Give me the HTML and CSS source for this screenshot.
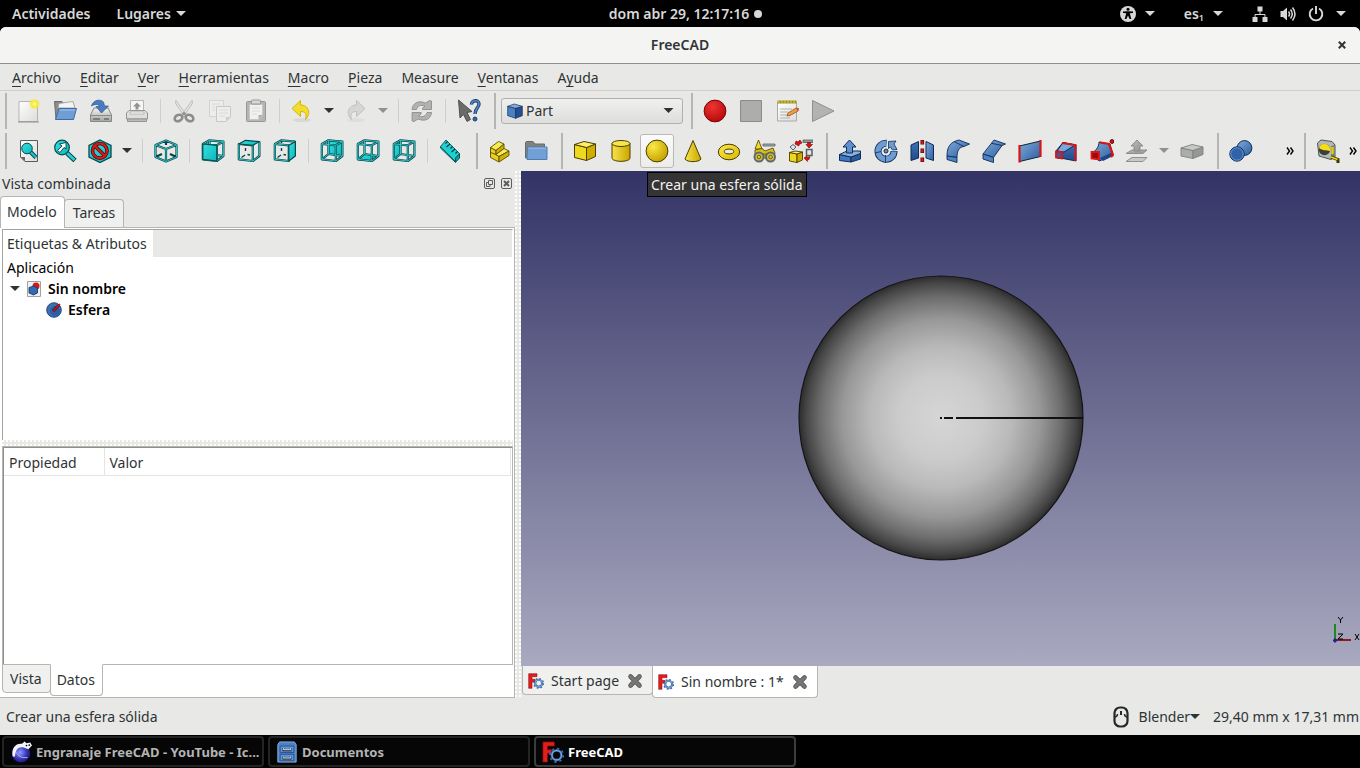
FILE: index.html
```html
<!DOCTYPE html>
<html lang="es">
<head>
<meta charset="utf-8">
<title>FreeCAD</title>
<link rel="stylesheet" href="styles.css">
</head>
<body>
<svg class="sprite" aria-hidden="true">
  <defs>
    <linearGradient id="g-teal" x1="0" y1="0" x2="1" y2="1"><stop offset="0" stop-color="#34e0e2"/><stop offset="1" stop-color="#0fb6ba"/></linearGradient>
    <linearGradient id="g-yel" x1="0" y1="0" x2="1" y2="1"><stop offset="0" stop-color="#fbe94a"/><stop offset="1" stop-color="#d9b800"/></linearGradient>
    <linearGradient id="g-yelh" x1="0" y1="0" x2="1" y2="0"><stop offset="0" stop-color="#f7e448"/><stop offset="1" stop-color="#c9a500"/></linearGradient>
    <radialGradient id="g-yelr" cx=".32" cy=".3" r=".8"><stop offset="0" stop-color="#fbe94a"/><stop offset=".5" stop-color="#dfc21c"/><stop offset="1" stop-color="#c19c00"/></radialGradient>
    <linearGradient id="g-blue" x1="0" y1="0" x2="1" y2="1"><stop offset="0" stop-color="#7fabdc"/><stop offset="1" stop-color="#2c5c9e"/></linearGradient>
    <linearGradient id="g-dblue" x1="0" y1="0" x2="0" y2="1"><stop offset="0" stop-color="#3f73b5"/><stop offset="1" stop-color="#20498a"/></linearGradient>
    <linearGradient id="g-gray" x1="0" y1="0" x2="1" y2="1"><stop offset="0" stop-color="#bcbcba"/><stop offset="1" stop-color="#92928f"/></linearGradient>
    <linearGradient id="g-paper" x1="0" y1="0" x2="1" y2="1"><stop offset="0" stop-color="#fff"/><stop offset="1" stop-color="#dcdcda"/></linearGradient>
    <linearGradient id="g-metal" x1="0" y1="0" x2="0" y2="1"><stop offset="0" stop-color="#f4f4f3"/><stop offset="1" stop-color="#a4a6a3"/></linearGradient>
    <radialGradient id="g-red" cx=".4" cy=".3" r=".8"><stop offset="0" stop-color="#ef3434"/><stop offset="1" stop-color="#b00505"/></radialGradient>
    <radialGradient id="g-glow"><stop offset="0" stop-color="#fffbb0"/><stop offset=".5" stop-color="#f6ea30"/><stop offset="1" stop-color="#f6ea30" stop-opacity="0"/></radialGradient>
    <radialGradient id="g-globe" cx=".45" cy=".45" r=".6"><stop offset="0" stop-color="#8fa0ff"/><stop offset=".6" stop-color="#3a34b8"/><stop offset="1" stop-color="#1a1670"/></radialGradient>
    <radialGradient id="g-sphere"><stop offset="0" stop-color="#d6d6d6"/><stop offset=".3" stop-color="#cbcbcb"/><stop offset=".5" stop-color="#b9b9b9"/><stop offset=".7" stop-color="#979797"/><stop offset=".85" stop-color="#6d6d6d"/><stop offset=".95" stop-color="#464646"/><stop offset="1" stop-color="#2c2c2c"/></radialGradient>
    <path id="wire" d="M1.800 5L15.800 6.300V22L1.800 20.300ZM8.500 1.300L22.400 2.600V17L8.500 15ZM1.800 5L8.500 1.300M15.800 6.300L22.400 2.600M15.800 22L22.400 17M1.800 20.300L8.500 15"/>
  </defs>
  <symbol id="i-new" viewBox="0 0 24 24"><path d="M2 2.500H20.500V22.500H2Z" fill="url(#g-paper)" stroke="#b4b4b2"/><path d="M1 23H22" stroke="#8d8d8b"/><circle cx="17.500" cy="5" r="6" fill="url(#g-glow)"/></symbol>
  <symbol id="i-open" viewBox="0 0 24 24"><path d="M1.500 2.500H9L11 4.500H20.500V20H3Z" fill="#8a8c89" stroke="#6c6e6b"/><path d="M6 4.500L20 2.500 22 9H5Z" fill="#f4f4f4" stroke="#a9a9a7"/><path d="M6 9.500H23.500L20.500 20.500H2.500Z" fill="#6f9dd4" stroke="#3d6ba8"/><path d="M7 11H22" stroke="#a5c4ea"/></symbol>
  <symbol id="i-save" viewBox="0 0 24 24"><path d="M5 9H19L22.500 16V22.500H1.500V16Z" fill="url(#g-metal)" stroke="#868885"/><path d="M2 16.500H22" stroke="#8a8c89"/><path d="M4 20H11M15 20H20" stroke="#6a6c69" stroke-width="1.500"/><path d="M2.500 7C4 1 11-.5 14.500 3L15.500 7H19.500L12.500 14 7 7.500H11C9 4.500 5.500 5 2.500 7Z" fill="#4b7cc0" stroke="#2d5792" stroke-width=".7"/></symbol>
  <symbol id="i-print" viewBox="0 0 24 24"><path d="M5.500 1.500H18.500V12H5.500Z" fill="#f6f6f5" stroke="#b5b5b3"/><path d="M12 3.500L16 7.500H13.500V10.500H10.500V7.500H8Z" fill="#929491"/><path d="M4 11.500H20L22.500 14V20H1.500V14Z" fill="#dededc" stroke="#939592"/><path d="M5 13H19V15H5Z" fill="#f9f9f8" stroke="#a6a8a5" stroke-width=".7"/><path d="M2.500 20V22.500H21.500V20Z" fill="#bcbdba" stroke="#939592"/></symbol>
  <symbol id="i-cut" viewBox="0 0 24 24"><path d="M4 1.500L14.500 16 12.500 17.500 3.500 4ZM20 1.500L9.500 16 11.500 17.500 20.500 4Z" fill="#e9e9e8" stroke="#aeb0ad" stroke-width=".8"/><g fill="none" stroke="#8b8d8a" stroke-width="2.600"><ellipse cx="6.500" cy="19" rx="4" ry="3" transform="rotate(-25 6.500 19)"/><ellipse cx="17.500" cy="19" rx="4" ry="3" transform="rotate(25 17.500 19)"/></g><circle cx="12" cy="14.500" r="1.500" fill="#8b8d8a"/></symbol>
  <symbol id="i-copy" viewBox="0 0 24 24"><g stroke="#d3d3d1" fill="#ededeb"><path d="M1.500 1.500H15.500V17.500H1.500Z"/><path d="M8.500 7.500H22.500V18L18 22.500H8.500Z" stroke="#c8c8c6"/></g><path d="M4 5H13M4 8H7M4 11H7M11 11H20M11 14H20M11 17H17" stroke="#dadad8"/><path d="M18 22V18H22Z" fill="#cacac8"/></symbol>
  <symbol id="i-paste" viewBox="0 0 24 24"><rect x="2.500" y="2.500" width="19" height="20" rx="1" fill="#b5b5b3" stroke="#979996"/><path d="M5.500 5.500H18.500V16L14.500 20.500H5.500Z" fill="#f1f1f0" stroke="#c5c5c3"/><path d="M14.500 20V16H18.500Z" fill="#aeb0ad"/><path d="M8 9H16M8 12H16M8 15H13" stroke="#dbdbd9"/><rect x="7.500" y="1" width="9" height="4" rx="1" fill="#d7d7d5" stroke="#989a97"/></symbol>
  <symbol id="i-undo" viewBox="0 0 24 24"><ellipse cx="12" cy="21" rx="9" ry="2" fill="#d8d8d6"/><path d="M2 9.500L10.500 1.500V6C18 6 22 14 15.500 20.500 17 15 15.500 12.500 10.500 12.500V17.500Z" fill="#f2dc2c" stroke="#cfb200" stroke-width=".9"/></symbol>
  <symbol id="i-redo" viewBox="0 0 24 24"><ellipse cx="12" cy="21" rx="9" ry="2" fill="#dededc"/><path d="M21 9.500L12.500 1.500V6C5 6 1 14 7.500 20.500 6 15 7.500 12.500 12.500 12.500V17.500Z" fill="#d6d6d4" stroke="#bdbdbb" stroke-width=".9"/></symbol>
  <symbol id="i-refresh" viewBox="0 0 24 24"><path id="rf" d="M2 10.500C3 4 8 1 15.500 4L19.500 1.500 21.500 2V10.500H12.500V9L15 7C10 5.500 8 7 6.500 10.500Z" fill="#b1b3b0" stroke="#8d8f8c" stroke-width=".9"/><use href="#rf" transform="rotate(180 11.800 12)"/></symbol>
  <symbol id="i-whats" viewBox="0 0 24 24"><path d="M1.500 1L15 12.500 10 13.500 13.500 20.500 10 22.500 6.500 15.500 3 19Z" fill="#6a6c69" stroke="#474946" stroke-width=".9"/><path d="M14.500 5.500C14.500 .5 22 .5 22 5 22 9 18 9 18 15" fill="none" stroke="#1d4076" stroke-width="3.400"/><path d="M14.500 5.500C14.500 .5 22 .5 22 5 22 9 18 9 18 15" fill="none" stroke="#5583c2" stroke-width="1.600"/><circle cx="18" cy="20" r="2" fill="#3566a8" stroke="#1d4076"/></symbol>
  <symbol id="i-part" viewBox="0 0 24 24"><g stroke="#122b50" stroke-linejoin="round"><path d="M1 5L13 8V23L1 19Z" fill="#4a80c4"/><path d="M13 8L23 5V19L13 23Z" fill="#234f8f"/><path d="M1 5L11 1.500 23 5 13 8Z" fill="#81acdc"/></g></symbol>
  <symbol id="i-rec" viewBox="0 0 24 24"><circle cx="12" cy="12" r="10.900" fill="url(#g-red)" stroke="#7e0202"/></symbol>
  <symbol id="i-stop" viewBox="0 0 24 24"><path d="M1.500 1.500H22.500V22.500H1.500Z" fill="#adadab" stroke="#8b8b89"/></symbol>
  <symbol id="i-macro" viewBox="0 0 24 24"><path d="M2.500 3.500H21.500V22H2.500Z" fill="url(#g-paper)" stroke="#a8aaa7"/><path d="M2.500 1.500H21.500V4.500H2.500Z" fill="#9b8f24"/><path d="M4 1V5M7 1V5M10 1V5M13 1V5M16 1V5M19 1V5" stroke="#dbce5c"/><path d="M5 10H17M5 13H13M5 16H14M5 19H15" stroke="#b0b2af"/><path d="M12 17L13 14 21 9 23.500 9.500 23 12 15 16.500Z" fill="#ee9b4c" stroke="#96531b" stroke-width=".8"/><path d="M21 9L23.500 9.500 23 12Z" fill="#d33c3c"/></symbol>
  <symbol id="i-play" viewBox="0 0 24 24"><path d="M1.500 1.500L23 12 1.500 22.500Z" fill="#b2b4b1" stroke="#8f918e"/></symbol>
  <symbol id="i-fit" viewBox="0 0 24 24"><path d="M3.500 1.500H20.500V22.500H8L3.500 18Z" fill="url(#g-paper)" stroke="#5a5c59"/><path d="M3.500 18H8V22.500Z" fill="#666"/><path d="M13.500 13L19 18.500" stroke="#043c3e" stroke-width="4"/><path d="M13.500 13L19 18.500" stroke="#1bc4c8" stroke-width="2.400"/><circle cx="10" cy="9.500" r="5.300" fill="url(#g-teal)" stroke="#064a4c" stroke-width="1"/></symbol>
  <symbol id="i-sel" viewBox="0 0 24 24"><path d="M14 14L22 21.500" stroke="#043c3e" stroke-width="4.800"/><path d="M14 14L21.500 21" stroke="#22d0d3" stroke-width="3"/><circle cx="9" cy="8.500" r="7.300" fill="url(#g-teal)" stroke="#064a4c" stroke-width="1.200"/><path d="M13 3.500V10L11 8.500 7 13.500 4.500 11.500 9 7 6.500 5Z" fill="#fff" stroke="#043c3e" stroke-width=".9"/></symbol>
  <symbol id="i-draw" viewBox="0 0 24 24"><path d="M12 1L23 6.500V18L12 23.500 1 18V6.500Z" fill="url(#g-teal)" stroke="#064a4c" stroke-width="1.300"/><g fill="none"><circle cx="11.800" cy="11.800" r="7.300" stroke="#4a0505" stroke-width="3.600"/><path d="M6.500 6.500L17 17" stroke="#4a0505" stroke-width="3.600"/><circle cx="11.800" cy="11.800" r="7.300" stroke="#d51a1a" stroke-width="2.200"/><path d="M6.500 6.500L17 17" stroke="#d51a1a" stroke-width="2.200"/></g></symbol>
  <symbol id="i-iso" viewBox="0 0 24 24"><path d="M12 1.500L22.500 6V18L12 22.500 1.500 18V6ZM1.500 6L12 10 22.500 6M12 10V22.500M12 1.500V6M1.500 18L8 15M22.500 18L16 15" class="wd"/><path d="M12 1.500L22.500 6V18L12 22.500 1.500 18V6ZM1.500 6L12 10 22.500 6M12 10V22.500" class="wl"/></symbol>
  <symbol id="i-front" viewBox="0 0 24 24"><use href="#wire" class="wd"/><use href="#wire" class="wl"/><path d="M1.800 5L15.800 6.300V22L1.800 20.300Z" class="wf"/></symbol>
  <symbol id="i-top" viewBox="0 0 24 24"><path d="M1.800 5L15.800 6.300V22L1.800 20.300ZM22.400 2.600V17L15.800 22" class="wd"/><path d="M8.500 9V12M8 16L4.500 18.500M10.500 15.500L13 16" class="wt"/><path d="M1.800 5L15.800 6.300V22L1.800 20.300ZM22.400 2.600V17L15.800 22" class="wl"/><path d="M1.800 5L8.500 1.300 22.400 2.600 15.800 6.300Z" class="wf"/></symbol>
  <symbol id="i-right" viewBox="0 0 24 24"><path d="M1.800 5L15.800 6.300V22L1.800 20.300ZM1.800 5L8.500 1.300 22.400 2.600" class="wd"/><path d="M8.500 1.300V4M8.500 9V12M8 16L4.500 18.500M10.500 15.500L13 16" class="wt"/><path d="M1.800 5L15.800 6.300V22L1.800 20.300ZM1.800 5L8.500 1.300 22.400 2.600" class="wl"/><path d="M15.800 6.300L22.400 2.600V17L15.800 22Z" class="wf"/></symbol>
  <symbol id="i-rear" viewBox="0 0 24 24"><path d="M8.500 1.300L22.400 2.600V17L8.500 15Z" class="wf"/><use href="#wire" class="wd"/><use href="#wire" class="wl"/></symbol>
  <symbol id="i-bottom" viewBox="0 0 24 24"><path d="M1.800 20.300L8.500 15 22.400 17 15.800 22Z" class="wf"/><use href="#wire" class="wd"/><use href="#wire" class="wl"/></symbol>
  <symbol id="i-left" viewBox="0 0 24 24"><path d="M1.800 5L8.500 1.300V15L1.800 20.300Z" class="wf"/><use href="#wire" class="wd"/><use href="#wire" class="wl"/></symbol>
  <symbol id="i-ruler" viewBox="0 0 24 24"><path d="M7 1L20.500 14.500 20 18.500 16.500 22.500 1.500 7.500Z" fill="#20cfd2" stroke="#06595b" stroke-width=".9"/><path d="M1.500 7.500L1.500 9 16.500 23.500 20.500 19V14.500L16.500 19V23" fill="#0f9da0" stroke="#06494b" stroke-width=".9"/><path d="M8.500 2.500L6.500 4.500M11 5L7.500 8M13.500 7.500L11.500 9.500M16 10L12.500 13M18.500 12.500L16.500 14.500" stroke="#053a3c" stroke-width="1.100"/></symbol>
  <symbol id="i-stack" viewBox="0 0 24 24"><g stroke="#5a4d00" stroke-width=".9" stroke-linejoin="round"><path d="M2.500 8.500L8 11.500V15.500L11 17.500V23L2.500 18.500Z" fill="#e9d020"/><path d="M2.500 8.500L10.500 2.500 16 5 8 11.500Z" fill="#f9ea52"/><path d="M8 11.500L16 5V9.500L8 15.500Z" fill="#ceb005"/><path d="M8 15.500L16 9.500 21 12 11 17.500Z" fill="#f9ea52"/><path d="M11 17.500L21 12V16.500L11 23Z" fill="#ceb005"/><path d="M2.500 13.500L8 15.500" fill="none"/></g></symbol>
  <symbol id="i-folder" viewBox="0 0 24 24"><path d="M1.500 4C1.500 3 2 2.500 3 2.500H9L11 5H20.500V19H1.500Z" fill="#80827f" stroke="#686a67"/><path d="M3.500 8H23V20.500H3Z" fill="#72a0d6" stroke="#4d7cb8"/><path d="M4.500 9.200H22" stroke="#9cc0ea"/></symbol>
  <symbol id="i-box" viewBox="0 0 24 24"><g stroke="#4a3f00" stroke-linejoin="round"><path d="M1.500 5.500L13.500 8.500V21.500L1.500 18.500Z" fill="#eed91e"/><path d="M13.500 8.500L22.500 5V17.500L13.500 21.500Z" fill="#cfae00"/><path d="M1.500 5.500L11 2.500 22.500 5 13.500 8.500Z" fill="#fcee68"/></g></symbol>
  <symbol id="i-cyl" viewBox="0 0 24 24"><path d="M3 4.500V19.500C5 23.300 19 23.300 21 19.500V4.500Z" fill="url(#g-yelh)" stroke="#4a3f00"/><ellipse cx="12" cy="4.500" rx="9" ry="3" fill="#f6e64a" stroke="#4a3f00"/></symbol>
  <symbol id="i-sph" viewBox="0 0 24 24"><circle cx="12" cy="12" r="10.900" fill="url(#g-yelr)" stroke="#4a3f00"/></symbol>
  <symbol id="i-cone" viewBox="0 0 24 24"><path d="M12 1.500L4 20C6 23.500 18 23.500 20 20Z" fill="url(#g-yelh)" stroke="#4a3f00" stroke-linejoin="round"/></symbol>
  <symbol id="i-torus" viewBox="0 0 24 24"><ellipse cx="12" cy="13" rx="10.700" ry="7.800" fill="url(#g-yel)" stroke="#4a3f00"/><ellipse cx="12" cy="12.500" rx="4.700" ry="2.400" fill="#e8e8e6" stroke="#4a3f00"/></symbol>
  <symbol id="i-prim" viewBox="0 0 24 24"><path d="M5.500 1L2 10H9Z" fill="#efd92a" stroke="#4a3f00" stroke-width=".8"/><path d="M10 5H22V7H10Z" fill="#a3adb2" stroke="#565f63" stroke-width=".8"/><path d="M2 11L9 9.500 12 12 20 9 22 14 21 17H2Z" fill="#ddc112" stroke="#4a3f00" stroke-width=".8"/><g fill="#cfc04e" stroke="#5e6a6f" stroke-width="2"><circle cx="6" cy="18" r="4.500"/><circle cx="17.500" cy="18" r="4.500"/></g><g fill="none" stroke="#6e6300"><circle cx="6" cy="18" r="1.800"/><circle cx="17.500" cy="18" r="1.800"/><path d="M10 15H14M10 19H14"/></g></symbol>
  <symbol id="i-shape" viewBox="0 0 24 24"><g stroke="#4a3f00" stroke-width=".9"><path d="M.5 13.500L8 15V23.500L.5 22Z" fill="#efd91e"/><path d="M8 15L13.500 13V21L8 23.500Z" fill="#cfae00"/><path d="M.5 13.500L6 12 13.500 13 8 15Z" fill="#fcee68"/></g><path d="M4 5.500L7 8 4 11 1 8Z" fill="#e2e4e3" stroke="#566064"/><path d="M6 5L7 2 9 3 11 1 13 4 10 5.500 10 7Z" fill="#d11" stroke="#700" stroke-width=".6"/><path d="M14 1H24V3.500H14Z" fill="#8f9a9f" stroke="#465054" stroke-width=".7"/><path d="M18.500 3.500H21.500V5.500H23.500L20 9 17 5.500H18.500Z" fill="#d11" stroke="#700" stroke-width=".6"/><path d="M17.500 10.500H23V16.500H17.500Z" fill="#e4e6e5" stroke="#566064" stroke-width="1.500"/><path d="M15 19L18 17V18.500L21 17.500 20 20.500 18 21 18.500 22.500Z" fill="#d11" stroke="#700" stroke-width=".6"/></symbol>
  <symbol id="i-extr" viewBox="0 0 24 24"><g stroke="#0f2c55" stroke-linejoin="round"><path d="M1.500 15.500L13 18V23L1.500 21.500Z" fill="#4079bf"/><path d="M13 18L22.500 14.500V20L13 23Z" fill="#2a5a9c"/><path d="M1.500 15.500L9 12H22.500V14.500L13 18Z" fill="#86b1e2"/><path d="M11.500 1L18 8H14.500V14H8.500V8H5Z" fill="#5c90cf"/></g></symbol>
  <symbol id="i-rev" viewBox="0 0 24 24"><g fill="none"><path d="M12.500 4.300A8 8 0 1 0 20 12" stroke="#0f2c55" stroke-width="7"/><path d="M12 4.300A8 8 0 1 0 20 12.500" stroke="#6d9cd3" stroke-width="5.400"/></g><path d="M11.500 16V24M1 14L7 12.500" stroke="#0f2c55" stroke-width=".8"/><path d="M14.500 9.500V2.500L22 2 20 5 23 10.500 18.500 11 16.500 8Z" fill="#6d9cd3" stroke="#0f2c55" stroke-width=".8"/><circle cx="12" cy="12" r="2" fill="#5f92cf" stroke="#0f2c55"/></symbol>
  <symbol id="i-mirror" viewBox="0 0 24 24"><path d="M1 6L8.500 2.500V19L1 21.500Z" fill="url(#g-dblue)" stroke="#0f2c55"/><path d="M16 2.500L23.500 6V21.500L16 19Z" fill="url(#g-blue)" stroke="#0f2c55"/><path d="M12.300 1V5.500M12.300 9.500V14M12.300 18.500V23" stroke="#5a0808" stroke-width="3.600"/><path d="M12.300 1.500V5M12.300 10V13.500M12.300 19V22.500" stroke="#dc1818" stroke-width="2"/></symbol>
  <symbol id="i-fillet" viewBox="0 0 24 24"><g stroke="#0f2c55" stroke-width=".9"><path d="M1 17C1 8 4 3 13 1L23.500 5 18 7.500C13 8 11 12 11 18.500Z" fill="url(#g-blue)"/><path d="M1 17L11 18.500V23.500L1 20.500Z" fill="#4d83c6"/><path d="M8 2.500L18 7.500" fill="none"/></g></symbol>
  <symbol id="i-chamf" viewBox="0 0 24 24"><g stroke="#0f2c55" stroke-width=".9"><path d="M1 15L12 1 23.500 5 20 6.500 11.500 18.500Z" fill="url(#g-blue)"/><path d="M1 15L11.500 18.500V23.500L1 20Z" fill="#4d83c6"/><path d="M9.500 4.300L20 6.500" fill="none"/></g></symbol>
  <symbol id="i-ruled" viewBox="0 0 24 24"><path d="M1.500 7L22.500 2V17.500L1.500 22.500Z" fill="url(#g-blue)" stroke="#123"/><path d="M1.500 6V23.500M22.500 1V18" stroke="#d81414" stroke-width="2.200"/></symbol>
  <symbol id="i-loft" viewBox="0 0 24 24"><path d="M2 12L9 3.500 22 6V22L9 19.500 3 19Z" fill="url(#g-dblue)" stroke="#0f2c55"/><path d="M3 12L9 3.500 21 6 10 13Z" fill="#7ba7da" stroke="#0f2c55"/><path d="M8 4L21.500 6V22" fill="none" stroke="#d81414" stroke-width="2"/><path d="M2 12.500L8 13V19.500L2 18.500Z" fill="#2d5fa5" stroke="#d81414" stroke-width="1.800"/></symbol>
  <symbol id="i-sweep" viewBox="0 0 24 24"><path d="M2 14C7 11 9 7 9 3L20 5 23 16 17 19 9 22Z" fill="url(#g-blue)" stroke="#0f2c55"/><path d="M10 19L23 13V17L13 22Z" fill="#1f4688"/><path d="M10 3.500L19 5 23 16 21 18" fill="none" stroke="#d81414" stroke-width="2.200"/><path d="M1.500 13H9V20.500L1.500 19.500Z" fill="#9a0b0b" stroke="#e01818" stroke-width="1.800"/><circle cx="22" cy="2.500" r="1.900" fill="#d81414" stroke="#600"/></symbol>
  <symbol id="i-offset" viewBox="0 0 24 24"><g fill="url(#g-gray)" stroke="#888a87" stroke-width=".9"><path d="M1 14.500L7 11H22L18 14.500Z"/><path d="M12 1L18 7H15V12H9V7H6Z"/><path d="M1 22.500L7 18.500H22L18 22.500Z" fill="#c8c8c6"/></g></symbol>
  <symbol id="i-thick" viewBox="0 0 24 24"><g stroke="#7f817e" stroke-width=".9"><path d="M1 9L13 11.500V19.500L1 17Z" fill="#abadaa"/><path d="M13 11.500L23 8V15.500L13 19.500Z" fill="#969895"/><path d="M1 9L12 5.500 23 8 13 11.500Z" fill="#c6c8c5"/></g></symbol>
  <symbol id="i-bool" viewBox="0 0 24 24"><circle cx="15.500" cy="9" r="7.400" fill="url(#g-blue)" stroke="#0f2c55"/><circle cx="8" cy="15" r="7.200" fill="#2f62a8" stroke="#0f2c55"/><circle cx="8" cy="15" r="6.200" fill="none" stroke="#6f9cd4" stroke-width=".9"/></symbol>
  <symbol id="i-tape" viewBox="0 0 24 24"><path d="M1.500 4L5 1 16 2.500 19 6V18L15 20.500 3 17Z" fill="#b3bab4" stroke="#4c524d"/><path d="M15 7L19 6V18L15 20.500Z" fill="#7a807b"/><circle cx="8.500" cy="10.500" r="5.700" fill="#3a3f3b"/><path d="M3 9A5.700 5.700 0 0 1 14 12C10 11 7 12 3 9Z" fill="#f5dd18"/><path d="M16.500 8V15" stroke="#e3ca10" stroke-width="2.500"/><path d="M15 18L22 20.500V24" fill="none" stroke="#3c3500" stroke-width="3"/><path d="M15 18L21.500 20.500" stroke="#f0d800" stroke-width="1.600"/></symbol>
  <symbol id="i-fc" viewBox="0 0 24 24"><path d="M1 1H13.500V5.500H6V9.500H10.500V13.500H6V23H1Z" fill="#e01f1f" stroke="#8b0b0b" stroke-width=".8"/><circle cx="16" cy="15.500" r="7.200" fill="none" stroke="#3f6eb0" stroke-width="2" stroke-dasharray="2.600 3.050"/><circle cx="16" cy="15.500" r="5.200" fill="none" stroke="#26508f" stroke-width="3"/><circle cx="16" cy="15.500" r="5.200" fill="none" stroke="#7aa5dc" stroke-width="1.600"/></symbol>
  <symbol id="i-x" viewBox="0 0 16 16"><path d="M3.500 3.500L12.500 12.500M12.500 3.500L3.500 12.500" stroke="#5a5c59" stroke-width="4.600" stroke-linecap="round"/><path d="M3.500 3.500L12.500 12.500M12.500 3.500L3.500 12.500" stroke="#767875" stroke-width="3" stroke-linecap="round"/></symbol>
  <symbol id="i-dn" viewBox="0 0 10 6"><path d="M0 0H10L5 5Z" fill="currentColor"/></symbol>
  <symbol id="i-more" viewBox="0 0 8 8"><path d="M1 .5L3.500 4 1 7.500M4.500 .5L7 4 4.500 7.500" fill="none" stroke="#000" stroke-width="1.400"/></symbol>
</svg>

<header class="topbar">
  <div class="topbar-side">
    <button class="top-item">Actividades</button>
    <button class="top-item">Lugares <svg class="dn"><use href="#i-dn"/></svg></button>
  </div>
  <button class="top-item clock">dom abr 29, 12:17:16 <span class="dot"></span></button>
  <div class="topbar-side topbar-end">
    <button class="top-item" aria-label="Accesibilidad"><svg class="ic16" viewBox="0 0 16 16"><circle cx="8" cy="8" r="8" fill="#d8d8d8"/><circle cx="8" cy="3.300" r="1.500"/><path d="M3 5.500L7 5.200H9L13 5.500V7L9.800 7.200 11.300 13H9.600L8 9.500 6.400 13H4.700L6.200 7.200 3 7Z"/></svg><svg class="dn"><use href="#i-dn"/></svg></button>
    <button class="top-item lang"><span>es<sub>1</sub></span><svg class="dn"><use href="#i-dn"/></svg></button>
    <button class="top-item sys" aria-label="Sistema"><svg class="ic16" viewBox="0 0 16 16"><path d="M5.500 .5H10.500V5.500H5.500ZM.5 11H5.500V16H.5ZM10.500 11H15.500V16H10.500Z" fill="#d8d8d8"/><path d="M8 5V8.500M3 11V8.500H13V11" fill="none" stroke="#d8d8d8"/></svg><svg class="ic16" viewBox="0 0 16 16"><path d="M.5 5H3L7 1.500V14.500L3 11H.5Z" fill="#d8d8d8"/><path d="M8.500 5.500Q10.500 8 8.500 10.500M10.500 3.500Q14 8 10.500 12.500M12.500 1.500Q17.500 8 12.500 14.500" fill="none" stroke="#d8d8d8" stroke-width="1.500"/></svg><svg class="ic16" viewBox="0 0 16 16"><path d="M5 2.500A6.300 6.300 0 1 0 11 2.500M8 0V8" fill="none" stroke="#d8d8d8" stroke-width="1.900"/></svg><svg class="dn"><use href="#i-dn"/></svg></button>
  </div>
</header>

<div class="window">
  <div class="titlebar"><h1>FreeCAD</h1><button class="win-close" aria-label="Cerrar"><svg viewBox="0 0 8 8"><path d="M.8 .8L7.200 7.200M7.200 .8L.8 7.200" stroke="#2e3436" stroke-width="2"/></svg></button></div>
  <nav class="menubar">
    <button><u>A</u>rchivo</button><button><u>E</u>ditar</button><button><u>V</u>er</button><button><u>H</u>erramientas</button><button><u>M</u>acro</button><button><u>P</u>ieza</button><button>Measure</button><button><u>V</u>entanas</button><button>A<u>y</u>uda</button>
  </nav>

  <div class="toolbar">
    <i class="grip"></i>
    <button class="tool" aria-label="Nuevo"><svg><use href="#i-new"/></svg></button>
    <button class="tool" aria-label="Abrir"><svg><use href="#i-open"/></svg></button>
    <button class="tool" aria-label="Guardar"><svg><use href="#i-save"/></svg></button>
    <button class="tool" aria-label="Imprimir"><svg><use href="#i-print"/></svg></button>
    <i class="sep"></i>
    <button class="tool" aria-label="Cortar"><svg><use href="#i-cut"/></svg></button>
    <button class="tool" aria-label="Copiar"><svg><use href="#i-copy"/></svg></button>
    <button class="tool" aria-label="Pegar"><svg><use href="#i-paste"/></svg></button>
    <i class="sep"></i>
    <button class="tool split" aria-label="Deshacer"><svg><use href="#i-undo"/></svg></button><button class="drop" aria-label="Lista de deshacer"><svg><use href="#i-dn"/></svg></button>
    <button class="tool split" aria-label="Rehacer"><svg><use href="#i-redo"/></svg></button><button class="drop off" aria-label="Lista de rehacer"><svg><use href="#i-dn"/></svg></button>
    <i class="sep"></i>
    <button class="tool" aria-label="Actualizar"><svg><use href="#i-refresh"/></svg></button>
    <i class="sep"></i>
    <button class="tool" aria-label="¿Qué es esto?"><svg><use href="#i-whats"/></svg></button>
    <i class="grip"></i>
    <div class="combo">
      <svg class="combo-icon"><use href="#i-part"/></svg>
      <select aria-label="Banco de trabajo"><option>Part</option></select>
      <svg class="combo-arrow"><use href="#i-dn"/></svg>
    </div>
    <i class="grip"></i>
    <button class="tool" aria-label="Grabar macro"><svg><use href="#i-rec"/></svg></button>
    <button class="tool" aria-label="Detener macro"><svg><use href="#i-stop"/></svg></button>
    <button class="tool" aria-label="Macros"><svg><use href="#i-macro"/></svg></button>
    <button class="tool" aria-label="Ejecutar macro"><svg><use href="#i-play"/></svg></button>
  </div>

  <div class="toolbar">
    <i class="grip"></i>
    <button class="tool" aria-label="Ajustar todo"><svg><use href="#i-fit"/></svg></button>
    <button class="tool" aria-label="Ajustar selección"><svg><use href="#i-sel"/></svg></button>
    <button class="tool split" aria-label="Estilo de dibujo"><svg><use href="#i-draw"/></svg></button><button class="drop" aria-label="Estilos"><svg><use href="#i-dn"/></svg></button>
    <i class="sep"></i>
    <button class="tool" aria-label="Isométrica"><svg><use href="#i-iso"/></svg></button>
    <i class="sep"></i>
    <button class="tool" aria-label="Frontal"><svg><use href="#i-front"/></svg></button>
    <button class="tool" aria-label="Superior"><svg><use href="#i-top"/></svg></button>
    <button class="tool" aria-label="Derecha"><svg><use href="#i-right"/></svg></button>
    <i class="sep"></i>
    <button class="tool" aria-label="Posterior"><svg><use href="#i-rear"/></svg></button>
    <button class="tool" aria-label="Inferior"><svg><use href="#i-bottom"/></svg></button>
    <button class="tool" aria-label="Izquierda"><svg><use href="#i-left"/></svg></button>
    <i class="sep"></i>
    <button class="tool" aria-label="Medir distancia"><svg><use href="#i-ruler"/></svg></button>
    <i class="grip"></i>
    <button class="tool" aria-label="Crear pieza"><svg><use href="#i-stack"/></svg></button>
    <button class="tool" aria-label="Crear grupo"><svg><use href="#i-folder"/></svg></button>
    <i class="grip"></i>
    <button class="tool" aria-label="Cubo"><svg><use href="#i-box"/></svg></button>
    <button class="tool" aria-label="Cilindro"><svg><use href="#i-cyl"/></svg></button>
    <div class="tip-host"><button class="tool hover" aria-describedby="tip" aria-label="Esfera"><svg><use href="#i-sph"/></svg></button><div class="tooltip" id="tip" role="tooltip">Crear una esfera sólida</div></div>
    <button class="tool" aria-label="Cono"><svg><use href="#i-cone"/></svg></button>
    <button class="tool" aria-label="Toro"><svg><use href="#i-torus"/></svg></button>
    <button class="tool" aria-label="Primitivas"><svg><use href="#i-prim"/></svg></button>
    <button class="tool" aria-label="Generador de formas"><svg><use href="#i-shape"/></svg></button>
    <i class="grip"></i>
    <button class="tool" aria-label="Extrusión"><svg><use href="#i-extr"/></svg></button>
    <button class="tool" aria-label="Revolución"><svg><use href="#i-rev"/></svg></button>
    <button class="tool" aria-label="Simetría"><svg><use href="#i-mirror"/></svg></button>
    <button class="tool" aria-label="Redondeo"><svg><use href="#i-fillet"/></svg></button>
    <button class="tool" aria-label="Chaflán"><svg><use href="#i-chamf"/></svg></button>
    <button class="tool" aria-label="Superficie reglada"><svg><use href="#i-ruled"/></svg></button>
    <button class="tool" aria-label="Puente"><svg><use href="#i-loft"/></svg></button>
    <button class="tool" aria-label="Barrido"><svg><use href="#i-sweep"/></svg></button>
    <button class="tool split" aria-label="Desfase"><svg><use href="#i-offset"/></svg></button><button class="drop off" aria-label="Desfases"><svg><use href="#i-dn"/></svg></button>
    <button class="tool" aria-label="Espesor"><svg><use href="#i-thick"/></svg></button>
    <i class="grip"></i>
    <button class="tool" aria-label="Booleana"><svg><use href="#i-bool"/></svg></button>
    <button class="more push" aria-label="Más"><svg><use href="#i-more"/></svg></button>
    <i class="grip"></i>
    <button class="tool" aria-label="Medir"><svg><use href="#i-tape"/></svg></button>
    <button class="more" aria-label="Más medidas"><svg><use href="#i-more"/></svg></button>
  </div>

  <main class="work">
    <section class="dock">
      <div class="dock-title"><h2>Vista combinada</h2>
        <button aria-label="Flotar"><svg viewBox="0 0 11 11"><rect x=".5" y=".5" width="10" height="10" rx="1.500"/><path d="M4.500 2.500H8.500V6.500H4.500ZM6 6.500V8.500H2.500V4.500H4.500"/></svg></button>
        <button aria-label="Cerrar panel"><svg viewBox="0 0 11 11"><rect x=".5" y=".5" width="10" height="10" rx="1.500"/><path d="M3 3L8 8M8 3L3 8" stroke-width="2"/></svg></button>
      </div>
      <div class="tabs"><button class="tab active">Modelo</button><button class="tab">Tareas</button></div>
      <div class="dock-body">
        <div class="tree">
          <div class="tree-head"><span>Etiquetas &amp; Atributos</span></div>
          <ul>
            <li>Aplicación</li>
            <li class="lvl1"><svg class="dn"><use href="#i-dn"/></svg><svg class="tree-icon" viewBox="0 0 16 16"><path d="M1.500 .5H14.500V15.500H1.500Z" fill="#eef2f6" stroke="#a0a29f"/><circle cx="10" cy="5" r="3.500" fill="#d81818"/><path d="M3 6.500L8 5 11.500 7V12L7.500 14 3 12Z" fill="#346bb0" stroke="#123058" stroke-width=".8"/></svg><b>Sin nombre</b></li>
            <li class="lvl2"><svg class="tree-icon" viewBox="0 0 16 16"><circle cx="8" cy="8" r="7.300" fill="#3c70b4" stroke="#1c3c6d" stroke-width=".9"/><circle cx="9" cy="9" r="5" fill="#2b5fa6"/><path d="M7 9L13 3" stroke="#3a0505" stroke-width="2.600"/><path d="M7 9L14 2" stroke="#d81818" stroke-width="1.600"/></svg><b>Esfera</b></li>
          </ul>
        </div>
        <div class="hsplit"></div>
        <div class="props"><table><thead><tr><th class="col-prop">Propiedad</th><th>Valor</th></tr></thead></table></div>
        <div class="tabs bottom"><button class="tab">Vista</button><button class="tab active">Datos</button></div>
      </div>
    </section>
    <div class="vsplit"></div>
    <section class="stage">
      <div class="view3d">
        <svg class="sphere" viewBox="0 0 286 286"><circle cx="143" cy="143" r="142" fill="url(#g-sphere)" stroke="#151515" stroke-width="1.200"/><path d="M142 143H144M146 143H155M158 143H285" stroke="#111" stroke-width="2"/></svg>
        <svg class="axes" viewBox="0 0 28 30"><path d="M3 28V11" stroke="#1c8a1c" stroke-width="2"/><path d="M3 27H19" stroke="#8a1c1c" stroke-width="2"/><path d="M1 27.500H5M3 25.500V29.500" stroke="#22229a" stroke-width="2"/><path d="M6 4L8.500 7 11 4M8.500 7V10M6 21H11L6 26H11M23 21L27 27M27 21L23 27" fill="none" stroke="#000"/></svg>
      </div>
      <div class="tabs bottom docs">
        <div class="tab"><svg class="fc"><use href="#i-fc"/></svg><button>Start page</button><button aria-label="Cerrar Start page"><svg class="x"><use href="#i-x"/></svg></button></div>
        <div class="tab active"><svg class="fc"><use href="#i-fc"/></svg><button>Sin nombre : 1*</button><button aria-label="Cerrar documento"><svg class="x"><use href="#i-x"/></svg></button></div>
      </div>
    </section>
  </main>

  <footer class="status">
    <span>Crear una esfera sólida</span>
    <button class="nav-style"><svg class="mouse" viewBox="0 0 16 22"><rect x="1.500" y="1.500" width="13" height="19" rx="5.500" fill="none" stroke="#232829" stroke-width="2.200"/><path d="M2 11Q4.500 10.500 4.500 8M14 11Q11.500 10.500 11.500 8" fill="none" stroke="#232829" stroke-width="1.400"/><path d="M8 5V9" stroke="#232829" stroke-width="2"/></svg>Blender<svg class="dn"><use href="#i-dn"/></svg></button>
    <span class="dims">29,40 mm x 17,31 mm</span>
  </footer>
</div>

<footer class="taskbar">
  <button><svg viewBox="0 0 24 24"><circle cx="12" cy="13.500" r="10" fill="url(#g-globe)"/><path d="M5 8Q8 20 19 18" fill="none" stroke="#a9b3ff"/><path d="M3 17C1 7 7 2 13 3L16 .5 18 2.500 22 1.500 24 5 20 9 15 7C9 6 6 9 5.500 17Z" fill="#f3f4fa"/><circle cx="18" cy="5" r=".9"/><circle cx="21" cy="4.500" r=".9"/></svg><span>Engranaje FreeCAD - YouTube - Ic...</span></button>
  <button><svg viewBox="0 0 24 24"><path d="M4 1H20L22 4V23H2V4Z" fill="#4c82c4" stroke="#8fb5e5"/><path d="M4.500 5.500H19.500V12.500H4.500ZM4.500 14.500H19.500V21.500H4.500Z" fill="#5f94d6" stroke="#234f8d"/><path d="M8.500 7.500V10H15.500V7.500M8.500 16.500V19H15.500V16.500" fill="none" stroke="#16202c" stroke-width="2.600"/><path d="M8.500 7.500V9.500H15.500V7.500M8.500 16.500V18.500H15.500V16.500" fill="none" stroke="#eee" stroke-width="1.200"/></svg><span>Documentos</span></button>
  <button class="current"><svg><use href="#i-fc"/></svg><span>FreeCAD</span></button>
</footer>
</body>
</html>
```
FILE: styles.css
```css
* { box-sizing: border-box; }

body {
  margin: 0;
  height: 100vh;
  display: flex;
  flex-direction: column;
  overflow: hidden;
  background: #000;
  color: #2e3436;
  font: 14px/20px "Noto Sans", "Open Sans", sans-serif;
}

button, select {
  margin: 0;
  padding: 0;
  border: 0;
  background: none;
  color: inherit;
  font: inherit;
  white-space: nowrap;
}

svg { display: block; flex: none; }
.sprite { position: absolute; width: 0; height: 0; }
.dn { width: 10px; height: 6px; color: #2e3436; }
.wd { fill: none; stroke: #0a4346; stroke-width: 2.2; stroke-linejoin: round; }
.wl { fill: none; stroke: #2ccfd2; stroke-width: .9; }
.wt { fill: none; stroke: #0a4346; stroke-width: 1.4; }
.wf { fill: url(#g-teal); stroke: #06494b; stroke-width: 1.2; stroke-linejoin: round; }

/* Desktop bar */
.topbar {
  display: flex;
  align-items: center;
  height: 27px;
  flex: none;
  padding: 0 14px 0 12px;
  color: #d8d8d8;
  font-weight: 600;
}
.topbar .dn { color: inherit; }
.topbar-side { flex: 1; display: flex; gap: 26px; }
.topbar-end { justify-content: flex-end; gap: 29px; }
.top-item { display: flex; align-items: center; gap: 5px; }
.clock { padding-left: 13px; }
.topbar-end .top-item { gap: 9px; }
.topbar-end .sys { gap: 12px; }
.lang sub { font-size: 9px; line-height: 1; vertical-align: -2px; }
.ic16 { width: 16px; height: 16px; }
.dot { width: 8px; height: 8px; border-radius: 50%; background: #d8d8d8; }

/* Window */
.window {
  flex: 1;
  min-height: 0;
  display: flex;
  flex-direction: column;
  background: #e8e8e6;
  border-radius: 6px 6px 0 0;
}
.titlebar {
  display: flex;
  align-items: center;
  height: 37px;
  flex: none;
  padding: 0 14px 0 22px;
  background: #f4f4f3;
  border-bottom: 1px solid #8f908a;
  border-radius: 6px 6px 0 0;
}
.titlebar h1 { flex: 1; margin: 0; text-align: center; font-size: 14px; font-weight: 600; }
.win-close svg { width: 8px; height: 8px; }
.menubar {
  display: flex;
  height: 27px;
  flex: none;
  padding: 2px 0 0 3px;
  border-bottom: 1px solid #d0d0ce;
}
.menubar button { padding: 0 10px 0 9px; }
.menubar u { text-underline-offset: 3px; text-decoration-thickness: 1px; }

/* Toolbars */
.toolbar { display: flex; align-items: center; height: 40px; flex: none; }
.grip { width: 2px; height: 36px; margin: 0 4px 0 7px; background: #b5b5b3; }
.grip:first-child { margin-left: 5px; }
.sep { width: 1px; height: 24px; margin: 0 5px; background: #cfcfcd; }
.tool {
  width: 36px;
  height: 36px;
  display: flex;
  align-items: center;
  justify-content: center;
}
.tool svg { width: 24px; height: 24px; }
.tool.split { width: 34px; }
.tool.hover {
  width: 34px;
  height: 34px;
  margin: 0 1px;
  border: 1px solid #b8b8b6;
  border-radius: 3px;
  background: linear-gradient(#fbfbfb, #ececea);
}
.drop { width: 20px; display: flex; justify-content: center; }
.drop svg { width: 10px; height: 6px; }
.off { color: #8f9190; }
.tip-host { position: relative; }
.tooltip {
  position: absolute;
  z-index: 5;
  top: 38px;
  left: 8px;
  padding: 2px 3px 1px;
  border: 1px solid #000;
  background: #343434;
  color: #f2f2f2;
  white-space: nowrap;
}
.more { width: 14px; display: flex; justify-content: center; }
.more svg { width: 8px; height: 8px; }
.push { margin-left: auto; }

.combo {
  display: grid;
  grid-template-columns: 24px 1fr 26px;
  align-items: center;
  width: 182px;
  height: 26px;
  margin: 0 1px;
  border: 1px solid #b0b0ae;
  border-radius: 3px;
  background: linear-gradient(#f0f0ef, #dededc);
}
.combo > * { grid-row: 1; }
.combo select { grid-column: 1 / -1; width: 100%; height: 24px; padding-left: 24px; appearance: none; }
.combo-icon { grid-column: 1; width: 16px; height: 16px; margin-left: 5px; pointer-events: none; }
.combo-arrow {
  grid-column: 3;
  width: 25px;
  height: 6px;
  pointer-events: none;
}

/* Work area */
.work { flex: 1; min-height: 0; display: grid; grid-template-columns: 515px 6px 1fr; }
.dock { display: flex; flex-direction: column; min-height: 0; }
.dock-title { display: flex; align-items: center; gap: 6px; height: 25px; padding: 0 3px 0 2px; }
.dock-title h2 { flex: 1; margin: 0; font-size: inherit; font-weight: 400; }
.dock-title svg { width: 11px; height: 11px; fill: none; stroke: #5c5e5b; }

.tabs { display: flex; align-items: flex-end; position: relative; z-index: 1; }
.tab {
  height: 28px;
  padding: 0 8px 1px;
  border: 1px solid #b5b5b1;
  border-bottom: 0;
  border-radius: 4px 4px 0 0;
  background: #f0f0ef;
}
.tab.active { height: 32px; padding: 0 7px 2px 6px; background: #fff; margin-bottom: -1px; }
.tab + .tab { margin-left: -1px; }
.dock-body {
  flex: 1;
  min-height: 0;
  display: flex;
  flex-direction: column;
  padding: 1px 1px 1px 2px;
  border: 1px solid #b5b5b1;
  border-left-width: 0;
  background: #fff;
}
.tree { flex: 212; min-height: 0; border: 1px solid #a3a39f; border-bottom: 0; border-right: 1px solid #fff; }
.tree-head { background: #e8e8e6; height: 27px; display: flex; }
.tree-head span { padding: 4px 6px 0 4px; background: #fff; }
.tree ul { margin: 0; padding: 0; list-style: none; color: #000; }
.tree li { display: flex; align-items: center; height: 21px; padding-left: 4px; }
.tree b { font-size: 14px; font-weight: 600; }
.tree .lvl1 { padding-left: 7px; }
.tree .lvl2 { padding-left: 43px; }
.tree-icon { width: 16px; height: 16px; margin-right: 6px; }
.lvl1 .tree-icon { margin-left: 6px; }
.hsplit, .vsplit {
  background: radial-gradient(circle at 1px 1px, #fff 1px, transparent 1px) 0 0 / 4px 4px, #e8e8e6;
}
.hsplit { height: 6px; flex: none; }
.props {
  flex: 218;
  min-height: 0;
  padding: 1px;
  border: 1px solid #b5b5b1;
  box-shadow: inset 1px 1px #8f8f8b;
}
.props table { width: 100%; border-collapse: collapse; }
.props th { height: 28px; padding: 3px 5px 0; border: solid #e4e4e2; border-width: 0 1px 1px 0; text-align: left; font-weight: 400; }
.props .col-prop { width: 100px; }

.tabs.bottom { align-items: flex-start; }
.bottom .tab { height: 29px; padding: 1px 8px 0 7px; border: 1px solid #b5b5b1; border-top: 0; border-radius: 0 0 4px 4px; }
.bottom .tab.active { margin-bottom: 0; height: 32px; padding: 0 7px 0 6px; }
.dock .bottom { margin-top: -1px; }
.dock .bottom .tab { border-top: 1px solid #b5b5b1; }
.dock .bottom .active { border-top-color: #fff; }

.stage { display: flex; flex-direction: column; min-width: 0; min-height: 0; }
.view3d {
  position: relative;
  flex: 1;
  display: flex;
  align-items: center;
  justify-content: center;
  padding-bottom: 2px;
  background: linear-gradient(#333366, #a9a9c0);
}
.sphere { width: 286px; height: 286px; }
.axes { position: absolute; right: 0; bottom: 23px; width: 28px; height: 30px; }
.docs { height: 32px; padding-left: 1px; }
.docs .tab, .docs .tab.active { display: flex; align-items: center; gap: 7px; padding: 1px 8px 0 5px; }
.docs .fc { width: 16px; height: 16px; }
.docs .x { width: 16px; height: 16px; margin: 0 1px; }

.status { display: flex; align-items: center; height: 37px; flex: none; padding: 0 1px 0 6px; }
.nav-style { display: flex; align-items: center; margin: 0 13px 0 auto; }
.mouse { width: 16px; height: 22px; margin-right: 10px; }

/* Task bar */
.taskbar { display: flex; gap: 4px; height: 33px; flex: none; padding: 1px 2px; }
.taskbar button {
  display: flex;
  align-items: center;
  gap: 4px;
  width: 262px;
  padding: 1px 6px 0;
  border: 2px solid #242424;
  border-radius: 4px;
  background: #060606;
  color: #b4b4b4;
  font-size: 13px;
  font-weight: 700;
}
.taskbar svg { width: 22px; height: 22px; }
.taskbar .current { border-color: #3c3c3c; color: #fff; }
```
